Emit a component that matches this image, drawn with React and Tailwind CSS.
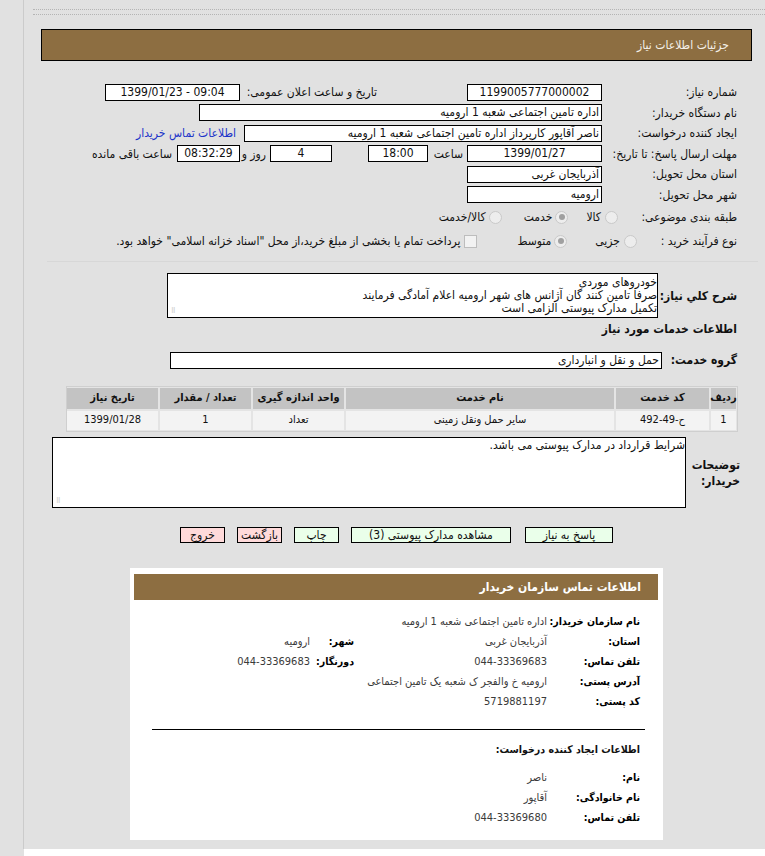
import React from 'react';

function Box({ className = '', children, ltr }) {
  return (
    <div
      dir={ltr ? 'ltr' : undefined}
      className={`h-[17px] shrink-0 overflow-hidden whitespace-nowrap border border-black bg-white px-[2px] text-[12px] leading-[15px] ${className}`}
    >
      {children}
    </div>
  );
}

function Radio({ checked }) {
  return (
    <span className="inline-flex h-[13px] w-[13px] shrink-0 items-center justify-center rounded-full border border-[#c9c9c9] bg-[#ededed]">
      {checked && <span className="h-[6px] w-[6px] rounded-full bg-[#a0a0a0]" />}
    </span>
  );
}

function Row({ label, children, className = 'h-[20.5px]', labelW = 'w-[135px]' }) {
  return (
    <div className={`flex items-center ${className}`}>
      <div className={`${labelW} shrink-0 whitespace-nowrap`}>{label}</div>
      {children}
    </div>
  );
}

const headers = ['ردیف', 'کد خدمت', 'نام خدمت', 'واحد اندازه گیری', 'تعداد / مقدار', 'تاریخ نیاز'];
const widths = ['w-[25px]', 'w-[93px]', 'w-[268px]', 'w-[91px]', 'w-[91px]', 'w-[91px]'];
const rowData = ['1', 'ح-49-492', 'سایر حمل ونقل زمینی', 'تعداد', '1', '1399/01/28'];

function InfoRow({ label, value, label2, value2 }) {
  return (
    <div className="flex h-[20px] items-center whitespace-nowrap">
      <div className="w-[93px] shrink-0 text-[10.5px] font-bold text-black">{label}</div>
      <div className="w-[193px] shrink-0 text-[11px] text-[#3a3a3a]">{value}</div>
      {label2 && <div className="w-[44px] shrink-0 text-[10.5px] font-bold text-black">{label2}</div>}
      {value2 && <div className="text-[11px] text-[#3a3a3a]">{value2}</div>}
    </div>
  );
}

export default function App() {
  return (
    <div dir="rtl" className="min-h-[856px] bg-[#e1e1e1] font-['DejaVu_Sans_Condensed','DejaVu_Sans',sans-serif] text-[12px] text-[#111]">
      <div className="ml-[23px] min-h-[849px] border-l border-[#cbcbcb] pt-[9px]">
        <div className="ml-[9px] h-[6px] border-y border-dotted border-[#b4b4b4]" />

        <div className="ml-[17px] mr-[13px] mt-[14px] flex h-[32px] items-center border border-black bg-[#8d6e41] pr-[22px] text-[12px] text-[#f4f0e8]">
          جزئیات اطلاعات نیاز
        </div>

        <div className="mr-[28px] mt-[21px]">
          <Row label="شماره نیاز:">
            <Box className="w-[135px] text-center">1199005777000002</Box>
            <div className="mr-[90px] w-[137px] shrink-0 whitespace-nowrap">تاریخ و ساعت اعلان عمومی:</div>
            <Box ltr className="w-[135px] text-center">1399/01/23 - 09:04</Box>
          </Row>
          <Row label="نام دستگاه خریدار:">
            <Box className="w-[403px]">اداره تامین اجتماعی شعبه 1 ارومیه</Box>
          </Row>
          <Row label="ایجاد کننده درخواست:">
            <Box className="w-[358px]">ناصر  آقاپور  کارپرداز اداره تامین اجتماعی شعبه 1 ارومیه</Box>
            <a className="mr-[8px] whitespace-nowrap text-[#1d35c9]">اطلاعات تماس خریدار</a>
          </Row>
          <Row label="مهلت ارسال پاسخ: تا تاریخ:">
            <Box className="w-[135px] text-center">1399/01/27</Box>
            <span className="mr-[4px] w-[35px] shrink-0">ساعت</span>
            <Box className="w-[60px] text-center">18:00</Box>
            <Box className="mr-[36px] w-[62px] text-center">4</Box>
            <span className="mr-[4px] w-[26px] shrink-0 whitespace-nowrap">روز و</span>
            <Box className="w-[63px] bg-[#efebcf] text-center">08:32:29</Box>
            <span className="mr-[5px] whitespace-nowrap">ساعت باقی مانده</span>
          </Row>
          <Row label="استان محل تحویل:">
            <Box className="w-[135px]">آذربایجان غربی</Box>
          </Row>
          <Row label="شهر محل تحویل:">
            <Box className="w-[135px]">ارومیه</Box>
          </Row>
          <Row label="طبقه بندی موضوعی:" className="h-[24px]" labelW="w-[119px]">
            <div className="flex items-center gap-[4px]">
              <Radio />
              <span>کالا</span>
            </div>
            <div className="mr-[18px] flex items-center gap-[3px]">
              <Radio checked />
              <span>خدمت</span>
            </div>
            <div className="mr-[22px] flex items-center gap-[3px]">
              <Radio />
              <span>کالا/خدمت</span>
            </div>
          </Row>
          <Row label="نوع فرآیند خرید :" className="h-[24px]" labelW="w-[100px]">
            <div className="flex items-center gap-[4px]">
              <Radio />
              <span>جزیی</span>
            </div>
            <div className="mr-[28px] flex items-center gap-[3px]">
              <Radio checked />
              <span>متوسط</span>
            </div>
            <div className="mr-[40px] flex items-center gap-[4px] whitespace-nowrap">
              <span className="h-[13px] w-[13px] shrink-0 border border-[#bdbdbd] bg-[#f2f2f2]" />
              <span>پرداخت تمام یا بخشی از مبلغ خرید،از محل "اسناد خزانه اسلامی" خواهد بود.</span>
            </div>
          </Row>
        </div>

        <div className="ml-[23px] mr-[7px] mt-[8px] border-t border-[#d7d7d7]" />

        <div className="mr-[28px] mt-[11px] flex items-center">
          <div className="w-[79px] shrink-0 whitespace-nowrap text-[12px] font-bold">شرح کلي نیاز:</div>
          <div className="relative h-[45px] w-[491px] whitespace-nowrap border border-black bg-white pt-[2px] text-[12px] leading-[13px]">
            <div>خودروهای موردی</div>
            <div>صرفا تامین کنند گان آژانس های شهر ارومیه اعلام آمادگی فرمایند</div>
            <div>تکمیل مدارک پیوستی الزامی است</div>
            <span className="absolute bottom-[2px] left-[3px] text-[7px] leading-[7px] text-[#aaa]">⠿</span>
          </div>
        </div>

        <div className="mr-[28px] mt-[2px] whitespace-nowrap text-[12px] font-bold">اطلاعات خدمات مورد نیاز</div>

        <div className="mr-[28px] mt-[13px] flex items-center">
          <div className="w-[75px] shrink-0 whitespace-nowrap text-[12px] font-bold">گروه خدمت:</div>
          <Box className="w-[492px]">حمل و نقل و انبارداری</Box>
        </div>

        <div className="mr-[27px] mt-[17px] w-[672px] border border-[#cfcfcf] bg-[#e4e4e4] p-[1px]">
          <div className="flex gap-[2px]">
            {headers.map((h, i) => (
              <div key={h} className={`${widths[i]} flex h-[21px] shrink-0 items-center justify-center whitespace-nowrap bg-[#c3c3c3] text-[11px] font-bold`}>
                {h}
              </div>
            ))}
          </div>
          <div className="mt-[2px] flex gap-[2px]">
            {rowData.map((d, i) => (
              <div key={i} className={`${widths[i]} flex h-[19px] shrink-0 items-center justify-center whitespace-nowrap bg-[#f3f3f3] text-[11px]`}>
                {d}
              </div>
            ))}
          </div>
        </div>

        <div className="mr-[25px] mt-[5px] flex items-center">
          <div className="w-[54px] shrink-0 whitespace-nowrap text-[12px] font-bold leading-[16px]">
            توضیحات
            <br />
            خریدار:
          </div>
          <div className="relative h-[71px] w-[634px] border border-black bg-white text-[12px] leading-[14px]">
            شرایط قرارداد در مدارک پیوستی می باشد.
            <span className="absolute bottom-[2px] left-[3px] text-[7px] leading-[7px] text-[#aaa]">⠿</span>
          </div>
        </div>

        <div className="mr-[152px] mt-[19px] flex gap-[12px] whitespace-nowrap">
          <button className="h-[16px] w-[88px] border border-black bg-[#eaffea] text-[12px] leading-[14px]">پاسخ به نیاز</button>
          <button className="mr-[2px] h-[16px] w-[160px] border border-black bg-[#eaffea] text-[12px] leading-[14px]">مشاهده مدارک پیوستی (3)</button>
          <button className="h-[16px] w-[45px] border border-black bg-[#eaffea] text-[12px] leading-[14px]">چاپ</button>
          <button className="h-[16px] w-[45px] border border-black bg-[#ffdada] text-[12px] leading-[14px]">بازگشت</button>
          <button className="h-[16px] w-[45px] border border-black bg-[#ffdada] text-[12px] leading-[14px]">خروج</button>
        </div>

        <div className="mr-[102px] mt-[25px] w-[533px] bg-white px-[5px] pb-[12px] pl-[4px] pt-[6px]">
          <div className="flex h-[26px] items-center bg-[#8d6e41] pr-[17px] text-[12px] font-bold text-white">
            اطلاعات تماس سازمان خریدار
          </div>
          <div className="mr-[18px] mt-[12px]">
            <InfoRow label="نام سازمان خریدار:" value="اداره تامین اجتماعی شعبه 1 ارومیه" />
            <InfoRow label="استان:" value="آذربایجان غربی" label2="شهر:" value2="ارومیه" />
            <InfoRow label="تلفن تماس:" value="044-33369683" label2="دورنگار:" value2="044-33369683" />
            <InfoRow label="آدرس پستی:" value="ارومیه خ والفجر ک شعبه یک تامین اجتماعی" />
            <InfoRow label="کد پستی:" value="5719881197" />
          </div>
          <div className="ml-[18px] mr-[13px] mt-[17px] border-t border-black" />
          <div className="mr-[18px] mt-[12px] whitespace-nowrap text-[10.5px] font-bold">اطلاعات ایجاد کننده درخواست:</div>
          <div className="mr-[18px] mt-[10px]">
            <InfoRow label="نام:" value="ناصر" />
            <InfoRow label="نام خانوادگی:" value="آقاپور" />
            <InfoRow label="تلفن تماس:" value="044-33369680" />
          </div>
        </div>
      </div>
      <div className="ml-[24px] h-[7px] bg-white" />
    </div>
  );
}
